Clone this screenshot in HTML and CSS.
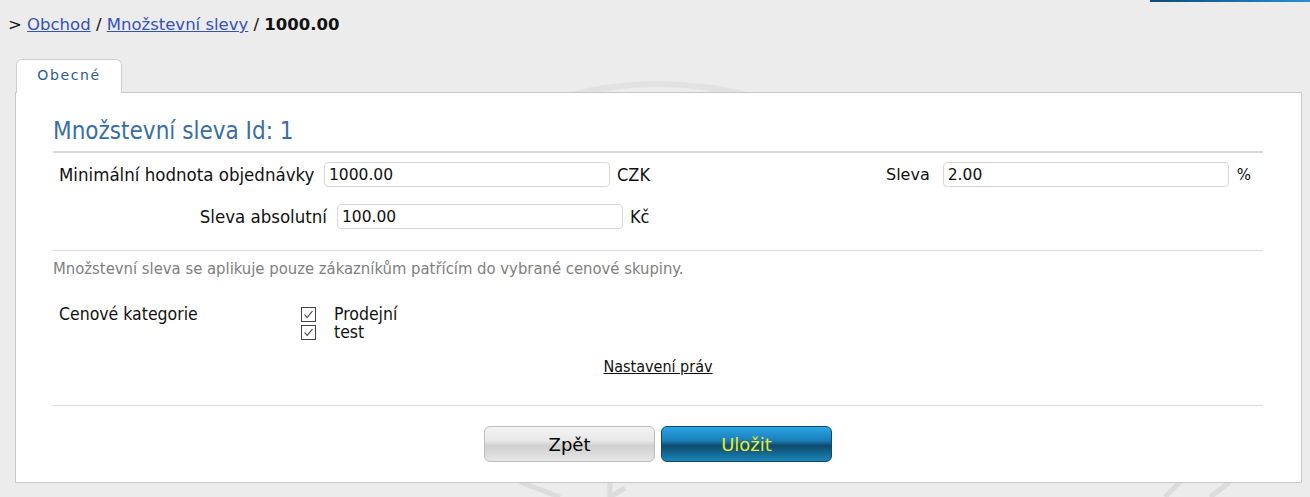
FILE: index.html
```html
<!DOCTYPE html>
<html lang="cs">
<head>
  <meta charset="UTF-8">
  <title>Množstevní slevy</title>
  <link rel="stylesheet" href="styles.css">
</head>
<body>
  <div class="top-bar"></div>
  <div class="watermark">
    <svg width="1310" height="497" viewBox="0 0 1310 497">
      <path d="M560 98 Q655 70 760 98" fill="none" stroke="#e2e2e2" stroke-width="6"/>
      <path d="M520 482 L560 497 M610 482 L610 497 L625 488 M1180 482 L1165 497 M1230 482 L1210 497" fill="none" stroke="#dcdcdc" stroke-width="5"/>
    </svg>
  </div>

  <div class="breadcrumb">
    &gt; <a href="#">Obchod</a> / <a href="#">Množstevní slevy</a> / <b>1000.00</b>
  </div>

  <div class="tabs">
    <div class="tab">Obecné</div>
  </div>

  <div class="panel">
    <h2 class="panel-title">Množstevní sleva Id: 1</h2>

    <div class="row row-first">
      <div class="field">
        <label class="label label-min">Minimální hodnota objednávky</label>
        <input class="input" type="text" value="1000.00">
        <span class="unit">CZK</span>
      </div>
      <div class="field field-right">
        <label class="label label-sleva">Sleva</label>
        <input class="input" type="text" value="2.00">
        <span class="unit unit-pct">%</span>
      </div>
    </div>

    <div class="row row-second">
      <div class="field">
        <label class="label label-abs">Sleva absolutní</label>
        <input class="input" type="text" value="100.00">
        <span class="unit">Kč</span>
      </div>
    </div>

    <hr class="divider">

    <p class="note">Množstevní sleva se aplikuje pouze zákazníkům patřícím do vybrané cenové skupiny.</p>

    <div class="categories">
      <div class="cat-label">Cenové kategorie</div>
      <div class="cat-list">
        <label class="check"><span class="box">
          <svg width="15" height="15" viewBox="0 0 15 15"><rect x="0.5" y="0.5" width="14" height="14" fill="#fff" stroke="#444"/><path d="M3.5 7.5 L6.2 10.5 L11.5 4" fill="none" stroke="#333" stroke-width="1.1"/></svg>
        </span>Prodejní</label>
        <label class="check"><span class="box">
          <svg width="15" height="15" viewBox="0 0 15 15"><rect x="0.5" y="0.5" width="14" height="14" fill="#fff" stroke="#444"/><path d="M3.5 7.5 L6.2 10.5 L11.5 4" fill="none" stroke="#333" stroke-width="1.1"/></svg>
        </span>test</label>
      </div>
    </div>

    <div class="rights"><a href="#">Nastavení práv</a></div>

    <hr class="divider divider-bottom">

    <div class="buttons">
      <button class="btn btn-back">Zpět</button>
      <button class="btn btn-save">Uložit</button>
    </div>
  </div>
</body>
</html>
```

FILE: styles.css
```css
body {
  margin: 0;
  background: #ececec;
  font-family: "DejaVu Sans", Verdana, sans-serif;
  color: #111;
  position: relative;
  height: 497px;
  overflow: hidden;
}

.top-bar {
  position: absolute;
  top: 0;
  right: 0;
  width: 160px;
  height: 2px;
  background: linear-gradient(to right, #0d4a78, #2a8ed0);
}

.watermark {
  position: absolute;
  top: 0;
  left: 0;
  z-index: 0;
}

.breadcrumb {
  position: relative;
  padding: 15px 0 0 8px;
  height: 31px;
  font-size: 16.5px;
  line-height: 20px;
}

.breadcrumb a {
  color: #3552b8;
}

.tabs {
  position: relative;
  display: flex;
  padding: 13px 0 0 16px;
  margin-bottom: -1px;
  z-index: 2;
}

.tab {
  width: 104px;
  height: 33px;
  background: #fff;
  border: 1px solid #cfcfcf;
  border-bottom: none;
  border-radius: 6px 6px 0 0;
  text-align: center;
  line-height: 30px;
  font-size: 14px;
  letter-spacing: 1.6px;
  color: #2c5b93;
}

.panel {
  position: relative;
  z-index: 1;
  margin: 0 8px 0 15px;
  background: #fff;
  border: 1px solid #c8c8c8;
  padding: 23px 38px 20px 37px;
  font-family: "DejaVu Sans Condensed", "DejaVu Sans", sans-serif;
  font-size: 18.5px;
}

.panel-title {
  margin: 0;
  font-weight: normal;
  font-size: 24px;
  line-height: 30px;
  color: #3a6ea5;
  padding-bottom: 5px;
  border-bottom: 2px solid #d8d8d8;
}

.row {
  display: flex;
  align-items: center;
}

.row-first {
  margin-top: 9px;
  justify-content: space-between;
}

.row-second {
  margin-top: 17px;
}

.field {
  display: flex;
  align-items: center;
}

.label {
  box-sizing: border-box;
  line-height: 22px;
}

.label-min {
  width: 271px;
  padding-left: 6px;
}

.label-abs {
  width: 284px;
  text-align: right;
  padding-right: 10px;
}

.label-sleva {
  font-family: "DejaVu Sans", sans-serif;
  font-size: 16px;
  margin-right: 13px;
}

.field-right {
  margin-right: 12px;
}

.input {
  width: 286px;
  height: 25px;
  box-sizing: border-box;
  border: 1px solid #d8d8d8;
  border-radius: 4px;
  padding: 1px 4px;
  font-family: "DejaVu Sans", sans-serif;
  font-size: 15.5px;
  color: #111;
}

.unit {
  margin-left: 7px;
  font-size: 18px;
}

.unit-pct {
  margin-left: 8px;
  font-family: "DejaVu Sans", sans-serif;
  font-size: 15px;
}

.divider {
  border: none;
  border-top: 1px solid #dcdcdc;
  margin: 21px 0 0;
}

.note {
  margin: 8px 0 0;
  color: #808080;
  font-size: 16.5px;
  line-height: 20px;
}

.categories {
  display: flex;
  margin-top: 26px;
  font-size: 17.5px;
}

.cat-label {
  width: 242px;
  padding-left: 6px;
  line-height: 18px;
}

.cat-list {
  display: flex;
  flex-direction: column;
}

.check {
  display: flex;
  align-items: center;
  line-height: 18px;
}

.box {
  display: flex;
  width: 33px;
}

.rights {
  text-align: center;
  margin-top: 16px;
  font-size: 16px;
  line-height: 20px;
}

.rights a {
  color: #111;
}

.divider-bottom {
  margin-top: 28px;
}

.buttons {
  display: flex;
  justify-content: center;
  gap: 6px;
  padding-top: 20px;
}

.btn {
  width: 171px;
  height: 36px;
  border-radius: 6px;
  font-family: "DejaVu Sans", sans-serif;
  font-size: 18px;
  cursor: pointer;
}

.btn-back {
  border: 1px solid #bdbdbd;
  color: #000;
  background: linear-gradient(to bottom, #f4f4f4 0%, #e8e8e8 40%, #d0d0d0 55%, #e6e6e6 100%);
}

.btn-save {
  border: 1px solid #0c4a6e;
  color: #e9ec22;
  background: linear-gradient(to bottom, #2aa6e6 0%, #1b7db8 40%, #0e4a6d 55%, #1a86b8 100%);
}
```
